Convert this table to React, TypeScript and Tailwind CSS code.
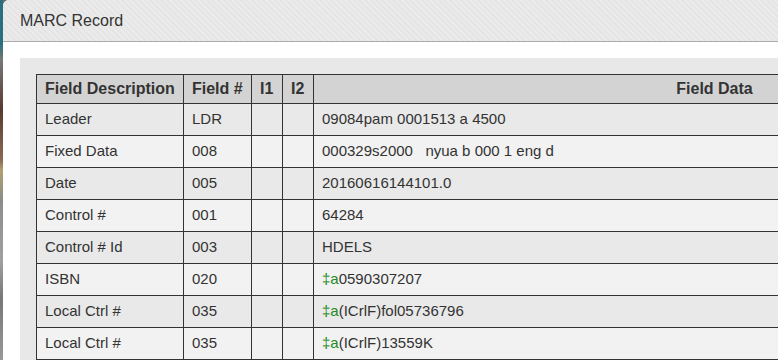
import React from 'react';

type Row = { desc: string; tag: string; i1?: string; i2?: string; sub?: string; data: string };

const rows: Row[] = [
  { desc: 'Leader', tag: 'LDR', data: '09084pam 0001513 a 4500' },
  { desc: 'Fixed Data', tag: '008', data: '000329s2000\u00a0\u00a0\u00a0nyua b 000 1 eng d' },
  { desc: 'Date', tag: '005', data: '20160616144101.0' },
  { desc: 'Control #', tag: '001', data: '64284' },
  { desc: 'Control # Id', tag: '003', data: 'HDELS' },
  { desc: 'ISBN', tag: '020', sub: 'a', data: '0590307207' },
  { desc: 'Local Ctrl #', tag: '035', sub: 'a', data: '(ICrlF)fol05736796' },
  { desc: 'Local Ctrl #', tag: '035', sub: 'a', data: '(ICrlF)13559K' },
];

const th = 'border border-[#333] px-2 h-[29px] font-bold text-[16px]';
const td = 'border border-[#333] px-2 h-8';

export default function App() {
  return (
    <div className="flex w-[778px] h-[360px] overflow-hidden bg-[#6b6b6b] font-['Liberation_Sans'] text-[#333]">
      <div className="w-[3px] shrink-0 bg-[linear-gradient(180deg,#2b6f7f_0px,#2b6f7f_44px,#777_60px,#5a3a30_110px,#8a6a55_160px,#b0a070_170px,#8c8c8c_200px,#a0a0a0_260px,#777_300px,#999_360px)]" />
      <div className="flex-1 flex flex-col bg-white rounded-tl-md overflow-hidden">
        <div className="h-[42px] shrink-0 flex items-center px-[17px] border-b border-[#ababab] bg-[repeating-linear-gradient(45deg,#e5e5e5_0px,#e5e5e5_2px,#ebebeb_2px,#ebebeb_4px)]">
          <h1 className="text-[16px] text-[#333]">MARC Record</h1>
        </div>
        <div className="flex-1 pt-4 pl-[17px]">
          <div className="h-full bg-[#e8e8e8] pt-4 pl-4 overflow-hidden">
            <table className="border-collapse text-[15px] table-fixed w-[1080px]">
              <colgroup>
                <col className="w-[147px]" />
                <col className="w-[68px]" />
                <col className="w-[31px]" />
                <col className="w-[31px]" />
                <col />
              </colgroup>
              <thead>
                <tr className="bg-[#d3d3d3]">
                  <th className={`${th} text-left`}>Field Description</th>
                  <th className={`${th} text-left`}>Field #</th>
                  <th className={`${th} text-left`}>I1</th>
                  <th className={`${th} text-left`}>I2</th>
                  <th className={`${th} text-center`}>Field Data</th>
                </tr>
              </thead>
              <tbody>
                {rows.map((r, i) => (
                  <tr key={i} className={i % 2 === 0 ? 'bg-[#e9e9e9]' : 'bg-[#f2f2f2]'}>
                    <td className={td}>{r.desc}</td>
                    <td className={td}>{r.tag}</td>
                    <td className={td}>{r.i1}</td>
                    <td className={td}>{r.i2}</td>
                    <td className={`${td} whitespace-pre`}>
                      {r.sub && <span className="text-[#228b22]">{'\u2021' + r.sub}</span>}
                      {r.data}
                    </td>
                  </tr>
                ))}
              </tbody>
            </table>
          </div>
        </div>
      </div>
    </div>
  );
}
